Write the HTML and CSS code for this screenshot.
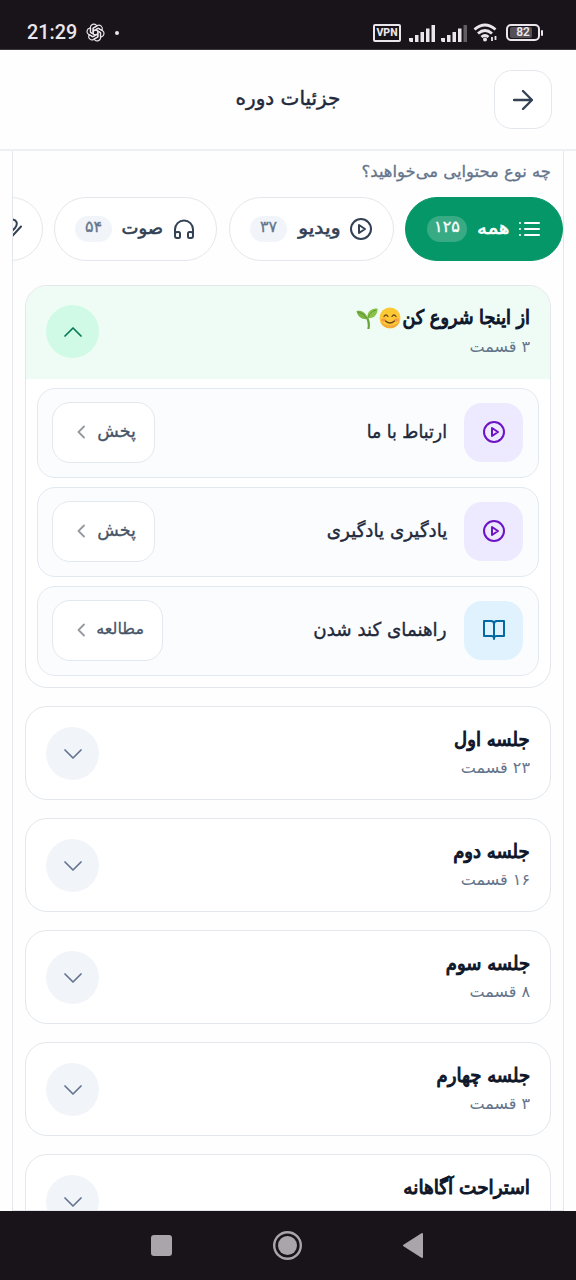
FILE: index.html
```html
<!DOCTYPE html>
<html lang="fa" dir="rtl">
<head>
<meta charset="utf-8">
<title>جزئیات دوره</title>
<link rel="stylesheet" href="styles.css">
</head>
<body>
<svg class="defs" width="0" height="0">
  <symbol id="play" viewBox="0 0 24 24"><circle cx="12" cy="12" r="10"/><path d="M10 8l6 4-6 4z"/></symbol>
  <symbol id="book" viewBox="0 0 24 24"><path d="M2 3h7a3 3 0 0 1 3 3 3 3 0 0 1 3-3h7v15h-7.500a2.500 2.500 0 0 0-2.500 2 2.500 2.500 0 0 0-2.500-2H2zM12 6v15"/></symbol>
  <symbol id="down" viewBox="0 0 18 10"><path d="M1 1l8 8 8-8"/></symbol>
  <symbol id="up" viewBox="0 0 18 10"><path d="M1 9l8-8 8 8"/></symbol>
  <symbol id="left" viewBox="0 0 8 14"><path d="M7 1.500L1.500 7l5.500 5.500"/></symbol>
</svg>
<div class="status" dir="ltr">
  <span class="time">21:29</span>
  <svg class="gpt" viewBox="0 0 24 24" width="19" height="19"><g id="g"><path id="p" d="M9 13.7V6.2l5.2-3a4.4 4.4 0 0 1 6.3 5M9 10.3l6.2-3.6 5 2.9"/><use href="#p" transform="rotate(60 12 12)"/><use href="#p" transform="rotate(120 12 12)"/><use href="#p" transform="rotate(180 12 12)"/><use href="#p" transform="rotate(240 12 12)"/><use href="#p" transform="rotate(300 12 12)"/></g></svg>
  <i class="dot"></i>
  <div class="sys">
    <span class="vpn">VPN</span>
    <svg class="sig" viewBox="0 0 26 18" width="26" height="18"><path d="M0 14h4v4H1.500Q0 18 0 16zM6 11h3.500v7H6zM11.500 8H15v10h-3.500zM17 4.500h3.500V18H17zM22.500 1H26v17h-3.500z"/></svg>
    <svg class="sig s2" viewBox="0 0 26 18" width="26" height="18"><path d="M0 14h4v4H1.500Q0 18 0 16zM6 11h3.500v7H6zM11.500 8H15v10h-3.500zM17 4.500h3.500V18H17z"/><path opacity=".35" d="M22.500 1H26v17h-3.500z"/></svg>
    <svg class="wifi" viewBox="0 0 25 19" width="25" height="19"><path d="M1.500 6.500q10.500-9 21 0M5 10.500q7-6 14 0M8.500 14q3.500-3 7 0"/><circle cx="12" cy="16.500" r="2"/><path class="thin" d="M19 14v4M22.500 13v4"/></svg>
    <span class="bat"><i></i><b>82</b></span>
  </div>
</div>
<header class="head">
  <button class="back"><svg viewBox="0 0 20 20" width="20" height="20"><path d="M1 10h18M10 1l9 9-9 9"/></svg></button>
  <h1><span class="t">جزئیات دوره</span></h1>
</header>
<main class="shell">
  <p class="ask"><span class="t">چه نوع محتوایی می‌خواهید؟</span></p>
  <div class="chips">
    <div class="chip on"><svg class="ic" viewBox="0 0 22 16" width="22" height="16"><path d="M6 2h14M6 8h14M6 14h14"/><path class="dots" d="M1 2h.01M1 8h.01M1 14h.01"/></svg><span class="t">همه</span><em><span class="t">۱۲۵</span></em></div>
    <div class="chip video"><svg class="ic" width="24" height="24"><use href="#play"/></svg><span class="t">ویدیو</span><em><span class="t">۳۷</span></em></div>
    <div class="chip audio"><svg class="ic" viewBox="0 0 24 24" width="24" height="24"><path d="M3 16v-3.500a9 9 0 0 1 18 0V19M3 16v3M5 15h1.500a1.500 1.500 0 0 1 1.500 1.500v3A1.500 1.500 0 0 1 6.500 21H5a2 2 0 0 1-2-2v-2a2 2 0 0 1 2-2zM19 15h-1.500a1.500 1.500 0 0 0-1.500 1.500v3a1.500 1.500 0 0 0 1.500 1.500H19a2 2 0 0 0 2-2v-2a2 2 0 0 0-2-2z"/></svg><span class="t">صوت</span><em><span class="t">۵۴</span></em></div>
    <div class="chip more"><svg class="ic" viewBox="0 0 24 24" width="24" height="24"><path d="M12 2.500q5-.5 6.500 2.500 1 3-1.500 6l-5 5M23 9.500l-10 11"/></svg></div>
  </div>

  <section class="card open">
    <div class="top">
      <div class="txt"><h2 class="h0"><span class="t">از اینجا شروع کن</span><svg class="emo" viewBox="0 0 22 22" width="22" height="22"><circle cx="11" cy="11" r="10.500" fill="#fcc934"/><path d="M1.500 15a10.500 10.500 0 0 0 19 0q-9 7-19 0z" fill="#f5a83b"/><ellipse cx="4.500" cy="13" rx="2.500" ry="1.700" fill="#f79b4a"/><ellipse cx="17.500" cy="13" rx="2.500" ry="1.700" fill="#f79b4a"/><path d="M5 9.500q2-3 4 0M13 9.500q2-3 4 0M6.500 14q4.500 4 9 0" fill="none" stroke="#6b4520" stroke-width="1.300" stroke-linecap="round"/></svg><svg class="emo" viewBox="0 0 22 22" width="22" height="22"><path d="M12.500 21.500q1-5-1-10" fill="none" stroke="#6aa335" stroke-width="2.200" stroke-linecap="round"/><path d="M12 12C10 5 5 3 .5 4c1 6 6 9 11.500 8z" fill="#7cb342"/><path d="M11.500 11C11 4 15 1.500 21.500 1.500 22 8 17 12 11.500 11z" fill="#8bc34a"/><path d="M2 5q5 1 9 6M20 3q-5 1-8 7" fill="none" stroke="#558b2f" stroke-width=".8"/></svg></h2><p><span class="t">۳ قسمت</span></p></div>
      <span class="tog"><svg width="18" height="10"><use href="#up"/></svg></span>
    </div>
    <div class="list">
      <div class="item"><span class="kind"><svg width="24" height="24"><use href="#play"/></svg></span><h3 class="i1"><span class="t">ارتباط با ما</span></h3><button class="go"><span class="t">پخش</span><svg width="8" height="14"><use href="#left"/></svg></button></div>
      <div class="item"><span class="kind"><svg width="24" height="24"><use href="#play"/></svg></span><h3 class="i2"><span class="t">یادگیری یادگیری</span></h3><button class="go"><span class="t">پخش</span><svg width="8" height="14"><use href="#left"/></svg></button></div>
      <div class="item"><span class="kind blue"><svg width="24" height="24"><use href="#book"/></svg></span><h3 class="i3"><span class="t">راهنمای کند شدن</span></h3><button class="go wide"><span class="t">مطالعه</span><svg width="8" height="14"><use href="#left"/></svg></button></div>
    </div>
  </section>
  <section class="card"><div class="top"><div class="txt"><h2><span class="t">جلسه اول</span></h2><p><span class="t">۲۳ قسمت</span></p></div><span class="tog"><svg width="18" height="10"><use href="#down"/></svg></span></div></section>
  <section class="card"><div class="top"><div class="txt"><h2><span class="t">جلسه دوم</span></h2><p><span class="t">۱۶ قسمت</span></p></div><span class="tog"><svg width="18" height="10"><use href="#down"/></svg></span></div></section>
  <section class="card"><div class="top"><div class="txt"><h2><span class="t">جلسه سوم</span></h2><p><span class="t">۸ قسمت</span></p></div><span class="tog"><svg width="18" height="10"><use href="#down"/></svg></span></div></section>
  <section class="card"><div class="top"><div class="txt"><h2><span class="t">جلسه چهارم</span></h2><p><span class="t">۳ قسمت</span></p></div><span class="tog"><svg width="18" height="10"><use href="#down"/></svg></span></div></section>
  <section class="card"><div class="top"><div class="txt"><h2 class="rest"><span class="t">استراحت آگاهانه</span></h2><p class="last"><span class="t">۲ قسمت</span></p></div><span class="tog"><svg width="18" height="10"><use href="#down"/></svg></span></div></section>
</main>
<nav class="nav" dir="ltr">
  <svg viewBox="0 0 576 69" width="576" height="69"><rect x="151" y="24" width="21" height="21" rx="3"/><circle cx="287.500" cy="34.500" r="9.500"/><circle cx="287.500" cy="34.500" r="13.300" class="ring"/><path d="M404 34.500L422 23v23z" stroke-width="2" stroke-linejoin="round" stroke="#aaa5aa"/></svg>
</nav>
</body>
</html>
```
FILE: styles.css
```css
* { box-sizing: border-box; margin: 0; padding: 0; }
body { width: 576px; height: 1280px; overflow: hidden; display: flex; flex-direction: column; background: #fefefe; font-family: "DejaVu Sans", sans-serif; color: #1e293b; }
svg { display: block; flex: none; fill: none; stroke: currentColor; stroke-width: 2; stroke-linecap: round; stroke-linejoin: round; }
.defs { position: absolute; }
.t { display: inline-block; white-space: nowrap; transform-origin: right center; }
button { background: #fff; font: inherit; color: inherit; }

.status { height: 50px; flex: none; background: #19141a; border-bottom: 1px solid #3c393c; color: #ebe6eb; display: flex; align-items: center; padding: 16px 36px 0 27px; font-family: Roboto, sans-serif; }
.time { font-size: 19.8px; font-weight: 500; width: 59px; }
.gpt { stroke-width: 1.5; }
.dot { width: 4px; height: 4px; border-radius: 50%; background: #ebe6eb; margin-left: 10px; }
.sys { margin-left: auto; display: flex; align-items: center; }
.vpn { width: 28px; height: 18px; border: 2px solid; border-radius: 2px; font-size: 10.5px; line-height: 14px; font-weight: 800; text-align: center; margin-right: 8px; }
.sig { fill: currentColor; stroke: none; margin-right: 6px; }
.wifi { stroke-width: 2.900; stroke-linecap: butt; }
.wifi circle { fill: currentColor; stroke: none; }
.wifi .thin { stroke-width: 1.800; }
.bat { position: relative; width: 34px; height: 17px; border: 2px solid; border-radius: 5px; margin-left: 8px; text-align: center; font-size: 12px; line-height: 13px; }
.bat i { position: absolute; inset: 1px 6px 1px 2px; background: #555056; border-radius: 2px; }
.bat b { position: relative; font-weight: 600; }
.bat::after { content: ""; position: absolute; right: -5px; top: 4px; width: 2px; height: 6px; background: currentColor; border-radius: 1px; }

.head { height: 101px; flex: none; border-bottom: 2px solid #edf0f2; display: grid; grid-template-columns: 58px 1fr 58px; align-items: center; padding: 0 24px; background: #fefefe; }
.back { width: 58px; height: 59px; border: 1px solid #e4e8ed; border-radius: 18px; display: grid; place-items: center; color: #334155; }
.back svg { stroke-width: 2.300; }
h1 { font-size: 20px; line-height: 30px; font-weight: 400; text-align: center; padding-bottom: 4px; -webkit-text-stroke: .45px; }

.shell { height: 1060px; flex: none; margin: 0 12px; border: 1px solid #e3e7eb; border-top: 0; padding: 6px 12px 0; overflow: hidden; display: flex; flex-direction: column; gap: 18px; }
.ask { height: 30px; line-height: 30px; font-size: 16.4px; color: #64748b; -webkit-text-stroke: .3px; }
.chips { display: flex; gap: 11px; margin: -8px -12px 6px; height: 64px; overflow: hidden; flex: none; }
.chip { flex: none; height: 64px; border: 1px solid #e4e7eb; border-radius: 32px; display: flex; align-items: center; padding: 0 20px; color: #334155; font-size: 18px; font-weight: 400; background: #fff; -webkit-text-stroke: .6px; }
.chip .t { line-height: 30px; padding-bottom: 2px; }
.chip em { font-style: normal; height: 26px; border-radius: 13px; background: #f1f5f9; color: #64748b; font-size: 16px; display: flex; justify-content: center; align-items: center; margin-right: auto; flex: none; -webkit-text-stroke: .3px; }
.chip em .t { padding-bottom: 4px; }
.chip.on { width: 158px; background: #059767; border-color: #059767; color: #fff; padding: 0 21px; }
.on em { width: 40px; background: #38ab84; color: #fff; }
.on .ic { margin-left: 9px; }
.on > .t { transform: scaleX(1.1); }
.video > .t { transform: scaleX(1.13); }
.video { width: 165px; }
.audio { width: 163px; margin-right: 1px; }
.video .ic, .audio .ic { margin-left: 9px; }
.video em, .audio em { width: 37px; }
.more { width: 150px; }

.card { flex: none; border: 1px solid #e3e7eb; border-radius: 22px; background: #fff; overflow: hidden; }
.top { height: 92px; display: flex; justify-content: space-between; padding: 20px 20px 0; }
.txt { display: flex; flex-direction: column; }
h2 { font-size: 19.5px; line-height: 26px; height: 26px; font-weight: 400; color: #0f172a; display: flex; align-items: center; -webkit-text-stroke: 1.1px; }
h2 .t { transform: scaleX(.925); }
.h0 .t { width: 128px; transform: scaleX(.905); }
.rest .t { transform: scaleX(.945); }
.txt p { font-size: 16px; line-height: 30px; color: #64748b; }
.txt .last { line-height: 28px; }
.tog { width: 53px; height: 53px; border-radius: 50%; background: #f1f5f9; color: #64748b; display: grid; place-items: center; }
.tog svg { stroke-width: 1.700; }
.open .top { height: 93px; background: #effcf6; padding-top: 19px; }
.open .txt p { line-height: 32px; }
.open .tog { background: #d0fae5; color: #047857; }
.emo { stroke: none; margin-right: 1px; }
.list { padding: 9px 11px 11px; display: flex; flex-direction: column; gap: 9px; }
.item { height: 90px; border: 1px solid #e2e8f0; border-radius: 18px; background: #fafcfe; display: flex; align-items: center; padding: 0 15px 2px 14px; }
.kind { width: 59px; height: 59px; border-radius: 18px; background: #ede9fe; color: #6d14c4; display: grid; place-items: center; }
.blue { background: #dff2fe; color: #0369a1; }
h3 { font-size: 19px; line-height: 30px; font-weight: 400; margin-right: 17px; padding-bottom: 3px; -webkit-text-stroke: .4px; }
h3 .t { transform: scaleX(.962); }
.i1 .t { transform: scaleX(.913); }
.go { width: 103px; height: 61px; border: 1px solid #e2e8f0; border-radius: 18px; margin-right: auto; display: flex; align-items: center; justify-content: space-between; padding: 0 18px 0 24px; color: #475569; font-size: 17.6px; -webkit-text-stroke: .3px; }
.go .t { padding-bottom: 3px; }
.go svg { color: #94999f; stroke-width: 1.800; }
.wide { width: 111px; font-size: 16px; }

.nav { height: 69px; flex: none; background: #19141a; }
.nav svg { fill: #aaa5aa; stroke: none; }
.nav .ring { fill: none; stroke: #aaa5aa; stroke-width: 2.400; }
```
